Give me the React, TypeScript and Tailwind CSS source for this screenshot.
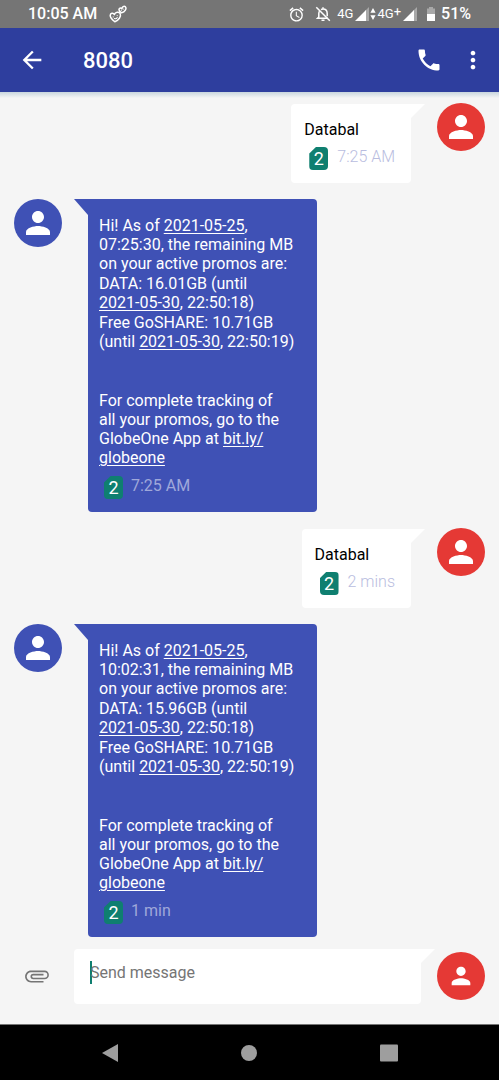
import type { ReactNode } from 'react';
import { MdAlarm, MdArrowBack, MdAttachFile, MdMoreVert, MdPerson, MdPhone } from 'react-icons/md';

type MessageProps = {
  outgoing?: boolean;
  time: string;
  children: ReactNode;
};

const SignalIcon = () => (
  <svg viewBox="0 0 14 14" className="w-3.5 h-3.5" aria-hidden="true">
    <path d="M14 0v14H10.500V3.500z" fill="#a8a8a8" />
    <path d="M0 14 11 3v11z" fill="#fff" />
  </svg>
);

const HeartsIcon = () => (
  <svg viewBox="0 0 18 18" className="w-[18px] h-[18px]" fill="none" stroke="#fff" strokeLinejoin="round" strokeLinecap="round" aria-hidden="true">
    <g strokeWidth="1.500">
      <path d="M5.800 16.800C3.600 14.900 1.200 12.800 1.200 10.400 1.200 7.900 4.300 7.300 5.400 9.600 6.200 7.100 10 6.300 11.200 8.700 12.500 11.600 9.600 15.200 5.800 16.800z" />
      <path d="M12.600 7.800C10.900 6.800 9.700 5.300 10.100 4 10.600 2.600 12.300 2.700 12.900 3.900 13 2 14.900.7 16.300 1.700 18 3.300 16 7 12.600 7.800z" />
    </g>
    <path d="M4.200 11.800v.1M8.200 10.500v.1M5.500 13.500c1 .4 2.200 0 2.700-1" strokeWidth="1.100" />
    <path d="M12.300 5.400v.1M14.600 4.100v.1" strokeWidth="0.900" />
  </svg>
);

const BellOffIcon = () => (
  <svg viewBox="0 0 16 16" className="w-4 h-4" fill="none" stroke="#fff" strokeWidth="1.5" aria-hidden="true">
    <path d="M4.500 5.200C4 6 3.800 6.800 3.800 7.700v3.200L2.500 12.300h10.300" />
    <path d="M6 3.700c.6-.4 1.200-.6 2-.6 2.500 0 4.200 1.900 4.200 4.400v2.700" />
    <path d="M8 1.200v1.600M6.500 14.300h3" />
    <path d="M1.300 1.300l13.500 13.500" />
  </svg>
);

const StatusBar = () => (
  <div className="h-7 bg-[#757575] text-white flex items-center px-7">
    <span className="text-base leading-5 font-medium">10:05 AM</span>
    <span className="ml-3">
      <HeartsIcon />
    </span>
    <div className="ml-auto flex items-center">
      <MdAlarm className="w-[17px] h-[17px]" />
      <span className="ml-2.5">
        <BellOffIcon />
      </span>
      <span className="ml-1.5 text-[13px] leading-5">4G</span>
      <span className="ml-0.5">
        <SignalIcon />
      </span>
      <svg viewBox="0 0 6 12" className="ml-px w-1.5 h-3" fill="#fff" aria-hidden="true">
        <path d="M3 0l2.600 4.800H.4zM3 12L.4 7.200h5.200z" />
      </svg>
      <span className="ml-px text-[13px] leading-5">
        4G<span className="relative -top-0.5">+</span>
      </span>
      <span className="ml-0.5">
        <SignalIcon />
      </span>
      <svg viewBox="0 0 8 14" className="ml-2.5 mr-1.5 w-2 h-3.5" aria-hidden="true">
        <path d="M2 0h4v1.500h2V7H0V1.500h2z" fill="#a8a8a8" />
        <path d="M0 7h8v7H0z" fill="#fff" />
      </svg>
      <span className="text-base leading-5 font-medium">51%</span>
    </div>
  </div>
);

const Header = () => (
  <header className="h-16 bg-[#2e3e9e] text-white flex items-center pl-[18px] pr-3">
    <button type="button" aria-label="Back">
      <MdArrowBack className="w-7 h-7" />
    </button>
    <h1 className="ml-[37px] pt-0.5 text-[22px] leading-7 font-medium">8080</h1>
    <button type="button" aria-label="Call" className="ml-auto">
      <MdPhone className="w-7 h-7" />
    </button>
    <button type="button" aria-label="More options" className="ml-4">
      <MdMoreVert className="w-7 h-7" />
    </button>
  </header>
);

const Message = ({ outgoing, time, children }: MessageProps) => {
  if (outgoing) {
    return (
      <div className="flex justify-end items-start">
        <div className="mt-px bg-white text-black rounded-sm rounded-tr-none pt-4 pb-[13px] pl-[13px] pr-4">
          <div className="leading-[19px]">{children}</div>
          <div className="mt-2 ml-[5px] flex gap-[9px]">
            <SimBadge />
            <span className="leading-5 font-light text-[#b9bde0]">{time}</span>
          </div>
        </div>
        <div className="mt-px w-3.5 h-3.5 bg-white [clip-path:polygon(0_0,100%_0,0_100%)]" />
        <Avatar className="ml-3 bg-[#e53935]" />
      </div>
    );
  }

  return (
    <div className="flex items-start">
      <Avatar className="mr-3 bg-[#3f51b5]" />
      <div className="w-3.5 h-4 bg-[#3f51b5] [clip-path:polygon(0_0,100%_0,100%_100%)]" />
      <div className="w-[229px] bg-[#3f51b5] text-white rounded rounded-tl-none pt-[17px] pb-[13px] pl-[11px]">
        <div className="leading-[19px] whitespace-nowrap flex flex-col gap-px">{children}</div>
        <div className="mt-[9px] ml-[5px] flex gap-2">
          <SimBadge />
          <span className="leading-5 text-[#9fa8da]">{time}</span>
        </div>
      </div>
    </div>
  );
};

const Avatar = ({ className }: { className: string }) => (
  <div className={`shrink-0 w-12 h-12 rounded-full text-white flex items-center justify-center ${className}`}>
    <MdPerson className="w-9 h-9" />
  </div>
);

const SimBadge = () => (
  <span className="w-[19px] h-[23px] rounded-sm bg-[#0f7f70] text-white text-lg leading-6 text-center [clip-path:polygon(35%_0,100%_0,100%_100%,0_100%,0_28%)]">
    2
  </span>
);

const Link = ({ children }: { children: ReactNode }) => (
  <a href="#" className="underline underline-offset-2 decoration-1">
    {children}
  </a>
);

const BalanceText = ({ time, data }: { time: string; data: string }) => (
  <>
    <p>
      Hi! As of <Link>2021-05-25</Link>,<br />
      {time}, the remaining MB
      <br />
      on your active promos are:
    </p>
    <p>
      DATA: {data} (until
      <br />
      <Link>2021-05-30</Link>, 22:50:18)
    </p>
    <p>
      Free GoSHARE: 10.71GB
      <br />
      (until <Link>2021-05-30</Link>, 22:50:19)
    </p>
    <p className="pt-[39px]">
      For complete tracking of
      <br />
      all your promos, go to the
      <br />
      GlobeOne App at{' '}
      <Link>
        bit.ly/
        <br />
        globeone
      </Link>
    </p>
  </>
);

const Composer = () => (
  <form className="flex items-start pr-3.5 pb-5" onSubmit={(e) => e.preventDefault()}>
    <button type="button" aria-label="Attach" className="shrink-0 w-[74px] h-[54px] flex items-center justify-center text-[#757575]">
      <MdAttachFile className="w-[26px] h-[26px] rotate-90" />
    </button>
    <div className="flex-1 min-w-0 h-[55px] bg-white rounded-sm rounded-tr-none pl-4 pt-3 flex items-start">
      <span className="w-0.5 h-[23px] -mr-0.5 bg-[#0f7f70]" />
      <input
        type="text"
        aria-label="Message"
        placeholder="Send message"
        className="flex-1 min-w-0 h-6 text-base text-black outline-none placeholder:text-[#757575]"
      />
    </div>
    <div className="w-3.5 h-3.5 bg-white [clip-path:polygon(0_0,100%_0,0_100%)]" />
    <button type="submit" aria-label="Send" className="ml-0.5 mt-[3px] shrink-0 w-12 h-12 rounded-full bg-[#e53935] text-white flex items-center justify-center">
      <MdPerson className="w-7 h-7" />
    </button>
  </form>
);

const NavBar = () => (
  <nav className="h-14 bg-black border-t border-[#757575] px-10 grid grid-cols-3 place-items-center">
    <button type="button" aria-label="Back">
      <svg viewBox="0 0 18 18" className="w-[18px] h-[18px]" fill="#9e9e9e">
        <path d="M17 0v18L1 9z" />
      </svg>
    </button>
    <button type="button" aria-label="Home">
      <svg viewBox="0 0 18 18" className="w-[18px] h-[18px]" fill="#9e9e9e">
        <circle cx="9" cy="9" r="8" />
      </svg>
    </button>
    <button type="button" aria-label="Recents">
      <svg viewBox="0 0 18 18" className="w-[18px] h-[18px]" fill="#9e9e9e">
        <rect y="0.500" width="18" height="17" rx="1" />
      </svg>
    </button>
  </nav>
);

export default function App() {
  return (
    <div className="min-h-screen flex flex-col bg-[#f5f5f5] text-base font-[Roboto,sans-serif]">
      <StatusBar />
      <Header />
      <div className="h-1.5 bg-gradient-to-b from-[#c9d6de] to-[#f5f5f5]" />
      <main className="flex-1 px-3.5 pt-[5px] flex flex-col gap-4">
        <Message outgoing time="7:25 AM">
          Databal
        </Message>
        <Message time="7:25 AM">
          <BalanceText time="07:25:30" data="16.01GB" />
        </Message>
        <Message outgoing time="2 mins">
          Databal
        </Message>
        <Message time="1 min">
          <BalanceText time="10:02:31" data="15.96GB" />
        </Message>
      </main>
      <Composer />
      <NavBar />
    </div>
  );
}
